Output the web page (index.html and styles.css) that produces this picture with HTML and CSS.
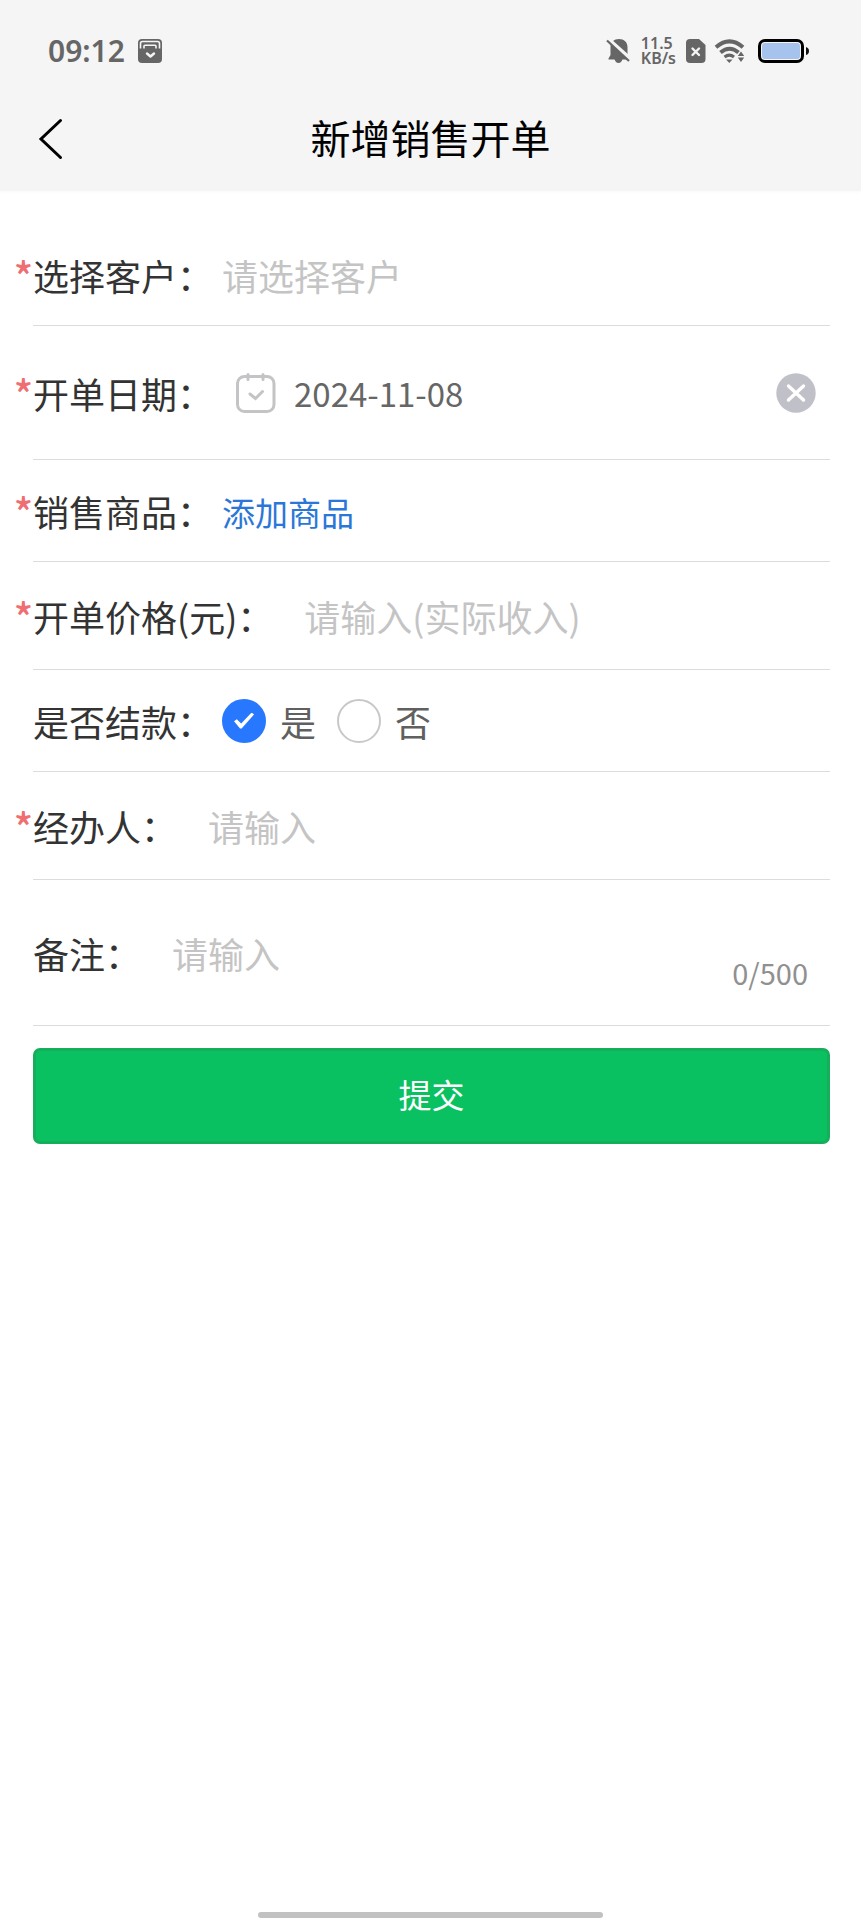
FILE: index.html
```html
<!DOCTYPE html>
<html lang="zh-CN">
<head>
<meta charset="utf-8">
<meta name="viewport" content="width=device-width, initial-scale=1">
<title>新增销售开单</title>
<link rel="stylesheet" href="styles.css">
</head>
<body>
<header class="header">
  <div class="status">
    <time class="clock">09:12</time>
    <svg width="24" height="24" viewBox="0 0 24 24" aria-hidden="true">
      <rect width="24" height="24" rx="4" fill="#666"/>
      <path d="M2.500 9.500V4.500q0-2 2-2h15q2 0 2 2v5" fill="none" stroke="#f5f5f5" stroke-width="1.600"/>
      <path d="M6 9.500V7.200q0-1 1-1h10q1 0 1 1v2.300" fill="none" stroke="#f5f5f5" stroke-width="1.600"/>
      <path d="M9 14.500l3.500 3 3.500-3" fill="none" stroke="#f5f5f5" stroke-width="2.400" stroke-linecap="round" stroke-linejoin="round"/>
    </svg>
    <div class="status-right">
      <svg width="24" height="24" viewBox="0 0 24 24" aria-hidden="true">
        <path d="M12 0c5 0 8.500 3 8.500 8v8l2 3.500v1H1.500v-1l2-3.500V8c0-5 3.500-8 8.500-8z" fill="#666"/>
        <path d="M7.500 20h8q-1 4-4 4t-4-4z" fill="#666"/>
        <path d="M1 0l23 20.500" stroke="#f5f5f5" stroke-width="4"/>
        <path d="M0 1.500L22 22" stroke="#666" stroke-width="2.200"/>
      </svg>
      <div class="speed">11.5<br>KB/s</div>
      <svg width="20" height="24" viewBox="0 0 20 24" aria-hidden="true">
        <path d="M4 0h9l6.500 6v14q0 4-4 4H4q-4 0-4-4V4q0-4 4-4z" fill="#666"/>
        <path d="M6.500 9.500l6.500 6.500M13 9.500L6.500 16" stroke="#f5f5f5" stroke-width="2.400" stroke-linecap="round"/>
      </svg>
      <svg class="wifi" width="30" height="24" viewBox="0 0 30 24" aria-hidden="true">
        <path d="M1 8.200Q14.500-3.500 28 8.200M5.500 13.500q9-7.500 18 0" fill="none" stroke="#666" stroke-width="4"/>
        <path d="M9.500 18q5-3.800 9.500 0" fill="none" stroke="#666" stroke-width="3"/>
        <path d="M11 20.500h6.500l-3.200 3.500z" fill="#666"/>
        <path d="M26 12.500l3.200 4.500h-6.400zM26 23l3.200-4.500h-6.400z" fill="#666"/>
      </svg>
      <svg width="52" height="24" viewBox="0 0 52 24" aria-hidden="true">
        <rect x="1.500" y="1.500" width="43" height="21" rx="5.500" fill="#f5f5f5" stroke="#000" stroke-width="3"/>
        <rect x="4" y="4" width="38" height="16" rx="3" fill="#a5c3ec"/>
        <path d="M48 8q3 1 3 4t-3 4z" fill="#111"/>
      </svg>
    </div>
  </div>
  <div class="nav">
    <button class="back" type="button" aria-label="返回">
      <svg width="24" height="42" viewBox="0 0 24 42" aria-hidden="true"><path d="M22.500 2.500L3 21l19.500 18.500" fill="none" stroke="#000" stroke-width="3" stroke-linecap="round"/></svg>
    </button>
    <h1 class="title">新增销售开单</h1>
  </div>
</header>
<main>
  <form class="form">
    <div class="row">
      <label class="label required" for="customer">选择客户：</label>
      <div class="picker"><input class="input" id="customer" type="text" placeholder="请选择客户" readonly></div>
    </div>
    <div class="row row-date">
      <label class="label required" for="date">开单日期：</label>
      <div class="date">
        <svg width="40" height="40" viewBox="0 0 40 40" aria-hidden="true" fill="none" stroke="#c4c4c6" stroke-linecap="round">
          <rect x="1.500" y="3.500" width="36.500" height="35" rx="7" stroke-width="3"/>
          <path d="M12 1.500v5M27 1.500v5" stroke-width="3"/>
          <path d="M14 21l5.500 4.500 7-7" stroke-width="3"/>
        </svg>
        <input class="input date-input" id="date" type="text" value="2024-11-08">
        <button class="clear" type="button" aria-label="清除日期">
          <svg width="40" height="40" viewBox="0 0 40 40" aria-hidden="true"><circle cx="20" cy="20" r="19.700" fill="#c0c0c8"/><path d="M12.500 13l15 14M27.500 13l-15 14" stroke="#fff" stroke-width="3.400" stroke-linecap="round"/></svg>
        </button>
      </div>
    </div>
    <div class="row">
      <span class="label required">销售商品：</span>
      <div class="picker"><a class="add" href="#">添加商品</a></div>
    </div>
    <div class="row row-input">
      <label class="label required" for="price">开单价格(元)：</label>
      <div class="field"><input class="input" id="price" type="text" placeholder="请输入(实际收入)"></div>
    </div>
    <div class="row" role="radiogroup" aria-labelledby="settled">
      <span class="label" id="settled">是否结款：</span>
      <div class="picker options">
        <label class="option"><input class="radio" type="radio" name="settled" checked>是</label>
        <label class="option"><input class="radio" type="radio" name="settled">否</label>
      </div>
    </div>
    <div class="row row-input">
      <label class="label required" for="handler">经办人：</label>
      <div class="field"><input class="input" id="handler" type="text" placeholder="请输入"></div>
    </div>
    <div class="row row-remark">
      <label class="label" for="remark">备注：</label>
      <div class="field"><textarea class="input" id="remark" rows="1" maxlength="500" placeholder="请输入"></textarea></div>
      <span class="count">0/500</span>
    </div>
    <button class="submit" type="submit">提交</button>
  </form>
</main>
<div class="home"></div>
</body>
</html>
```
FILE: styles.css
```css
* {
  box-sizing: border-box;
}

body {
  margin: 0;
  min-height: 100vh;
  display: flex;
  flex-direction: column;
  background: #fff;
  color: #333;
  font-family: "Noto Sans CJK SC", sans-serif;
  font-size: 36px;
  line-height: 52px;
}

svg {
  display: block;
  flex: none;
  overflow: visible;
}

button,
input,
textarea {
  margin: 0;
  padding: 0;
  border: 0;
  background: none;
  color: inherit;
  font: inherit;
  outline: none;
}

.header {
  padding-bottom: 19px;
  background: #f5f5f5;
  box-shadow: 0 0 4px #f5f5f5;
}

.status {
  display: flex;
  align-items: center;
  height: 102px;
  padding: 0 51px 0 48px;
  color: #666;
  font-family: "Noto Sans", sans-serif;
  font-weight: 600;
}

.clock {
  margin-right: 13px;
  font-size: 30px;
}

.status-right {
  display: flex;
  align-items: center;
  margin-left: auto;
}

.speed {
  margin: 0 10px;
  font-size: 16px;
  line-height: 15px;
}

.wifi {
  margin: 0 13px 0 9px;
}

.nav {
  display: grid;
  grid-template-columns: 1fr auto 1fr;
  align-items: center;
  height: 70px;
  padding: 0 38px;
  color: #000;
}

.back {
  justify-self: start;
  padding-top: 4px;
}

.title {
  margin: 0;
  font-size: 40px;
  font-weight: 400;
}

.form {
  padding: 33px 31px 0 33px;
}

.row {
  display: flex;
  align-items: center;
  min-height: 102px;
  border-bottom: 1px solid #dcdcdc;
}

.row-input {
  min-height: 108px;
}

.row-date {
  min-height: 134px;
}

.row-remark {
  min-height: 146px;
}

.label {
  position: relative;
  flex: none;
}

.required::before {
  content: "*";
  position: absolute;
  right: 100%;
  color: #ee6e72;
  font-size: 40px;
  font-weight: 500;
}

.picker {
  flex: 1;
  padding-left: 9px;
}

.field {
  flex: 1;
  padding-left: 31px;
}

.input {
  display: block;
  width: 100%;
  height: 52px;
  resize: none;
  overflow: hidden;
}

.input::placeholder {
  color: #c4c4c4;
  opacity: 1;
}

.date {
  flex: 1;
  display: flex;
  align-items: center;
  gap: 18px;
  padding: 0 14px 0 23px;
}

.date-input {
  flex: 1;
  min-width: 0;
  color: #666;
  font-size: 33px;
}

.add {
  color: #2b77d8;
  font-size: 33px;
  text-decoration: none;
}

.options {
  display: flex;
  gap: 21px;
}

.option {
  display: flex;
  align-items: center;
  gap: 14px;
  color: #606060;
}

.radio {
  appearance: none;
  width: 44px;
  height: 44px;
  border: 2px solid #c8c8c8;
  border-radius: 50%;
}

.radio:checked {
  display: grid;
  place-items: center;
  border-color: #2878ff;
  background: #2878ff;
}

.radio:checked::before {
  content: "";
  width: 20px;
  height: 16px;
  background: #fff;
  clip-path: polygon(0 54%, 14% 42%, 36% 68%, 88% 0, 100% 12%, 38% 100%, 30% 100%);
}

.count {
  align-self: flex-end;
  margin: 0 22px 27px 0;
  color: #909090;
  font-size: 29px;
}

.submit {
  display: block;
  width: 100%;
  height: 96px;
  margin-top: 22px;
  padding-bottom: 4px;
  border: 3px solid #16ad5b;
  border-radius: 7px;
  background: #09c160;
  color: #fff;
  font-size: 33px;
}

.home {
  width: 40%;
  height: 6px;
  margin: auto auto 2px;
  border-radius: 3px;
  background: #c1c1c1;
}
```
